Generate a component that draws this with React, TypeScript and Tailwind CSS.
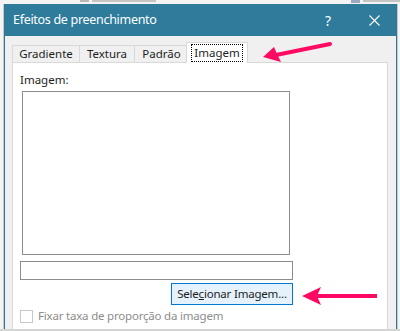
import { useState } from "react";

const font = { fontFamily: '"Noto Sans", "Liberation Sans", sans-serif' };

const tabs = ["Gradiente", "Textura", "Padrão", "Imagem"];

export default function App() {
  const [active, setActive] = useState("Imagem");
  const [lockRatio, setLockRatio] = useState(false);

  return (
    <div className="relative w-[400px] h-[331px] overflow-hidden bg-[#ececec] text-[#1e1e1e]" style={font}>
      {/* excel ribbon behind the dialog, only a sliver shows */}
      <div className="h-[4px] flex items-start gap-[3px] bg-[#f3f3f3]">
        <div className="ml-[80px] w-[10px] h-[2px] bg-[#b8b8b8]" />
        <div className="w-[70px] h-[2px] bg-[#c4c4c4]" />
        <div className="ml-[192px] w-[10px] h-[3px] bg-[#9aa8c0]" />
        <div className="w-[40px] h-[2px] bg-[#c4c4c4]" />
      </div>

      <div className="flex h-[325px]">
        <div className="w-[4px] border-r border-[#c8c8c8] bg-[#f4f4f4]" />

        {/* dialog */}
        <div className="w-[393px] flex flex-col border-x border-[#2c7898] bg-[#f0f0f0]">
          <div className="h-[32px] shrink-0 bg-[#2e7b9b] flex items-center text-white">
            <span className="ml-[8px] text-[12.5px] tracking-[-0.3px]">Efeitos de preenchimento</span>
            <span className="ml-auto mr-[38px] text-[14px]">?</span>
            <svg width="11" height="11" viewBox="0 0 11 11" className="mr-[16px]">
              <path d="M0.5 0.5 L10.5 10.5 M10.5 0.5 L0.5 10.5" stroke="white" strokeWidth="1.1" />
            </svg>
          </div>

          <div className="flex-1 px-[7px] pt-[6px] flex flex-col">
            {/* tab strip */}
            <div className="flex items-end h-[20px] text-[11.5px] leading-none relative z-10">
              {tabs.map((t) =>
                t === active ? (
                  <button
                    key={t}
                    onClick={() => setActive(t)}
                    className="-ml-[2px] h-[21px] -mb-[1px] w-[62px] bg-white border border-b-0 border-[#d9d9d9] flex items-center justify-center"
                  >
                    <span className="outline outline-1 outline-dotted outline-black px-[2px] py-[2px]">{t}</span>
                  </button>
                ) : (
                  <button
                    key={t}
                    onClick={() => setActive(t)}
                    className={
                      "h-[17px] bg-[#f0f0f0] border border-b-0 border-[#d9d9d9] -mr-px flex items-center justify-center " +
                      (t === "Gradiente" ? "w-[68px]" : t === "Textura" ? "w-[56px]" : "w-[55px]")
                    }
                  >
                    {t}
                  </button>
                )
              )}
            </div>

            {/* panel */}
            <div className="flex-1 w-[376px] bg-white border border-[#d9d9d9] border-b-0 px-[7px] pt-[11px] text-[11px]">
              <div className="leading-none text-[11.5px]">Imagem:</div>
              <div className="ml-[2px] mt-[5px] w-[268px] h-[164px] border border-[#8c8c8c]" />
              <div className="mt-[6px] w-[273px] h-[19px] border border-[#8c8c8c]" />
              <div className="w-[273px] flex justify-end mt-[3px]">
                <button className="w-[122px] h-[22px] bg-[#e5f1fb] border border-[#0078d7] text-[11.5px] tracking-[-0.2px] leading-none">
                  Sele<span className="underline">c</span>ionar Imagem...
                </button>
              </div>
              <label className="mt-[5px] flex items-center text-[#8d8d8d] leading-none text-[11.5px] tracking-[-0.2px]">
                <input
                  type="checkbox"
                  checked={lockRatio}
                  onChange={(e) => setLockRatio(e.target.checked)}
                  disabled
                  className="appearance-none w-[13px] h-[13px] border border-[#c8c8c8] bg-white"
                />
                <span className="ml-[5px] -mt-[1px]">Fixar taxa de proporção da imagem</span>
              </label>
            </div>
          </div>
        </div>

        <div className="flex-1 bg-[#f4f4f4] border-l border-[#c8c8c8]" />
      </div>
      <div className="h-[2px] bg-[#d4d4d4]" />

      {/* annotation arrows */}
      <svg className="absolute inset-0 pointer-events-none" width="400" height="331">
        <path d="M330 44 L276 55" stroke="#ff0a62" strokeWidth="4" strokeLinecap="round" />
        <path d="M263 57 L274 47 L277 54 L281 62 Z" fill="#ff0a62" />
        <path d="M377 296 L316 296" stroke="#ff0a62" strokeWidth="4" />
        <path d="M302 296 L321 287 L317 296 L321 305 Z" fill="#ff0a62" />
      </svg>
    </div>
  );
}
